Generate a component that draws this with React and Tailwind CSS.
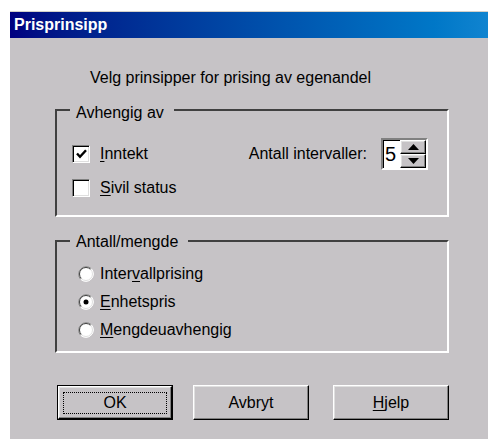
import React from "react";

const GRAY = "bg-[#c6c3c6]";

// classic raised 3D bevel used by push buttons and spinner arrows
const raised =
  "border border-t-white border-l-white border-r-black border-b-black shadow-[inset_-1px_-1px_#808080,inset_1px_1px_#dfdfdf]";

function Checkbox({ checked }) {
  return (
    <span className="w-[18px] h-[18px] shrink-0 bg-white border border-t-[#808080] border-l-[#808080] border-r-white border-b-white shadow-[inset_1px_1px_#000,inset_-1px_-1px_#dfdfdf] flex items-center justify-center">
      {checked && (
        <svg width="11" height="10" viewBox="0 0 11 10">
          <path d="M1 4.5 L4 7.8 L10 1.2" stroke="#000" strokeWidth="2.4" fill="none" />
        </svg>
      )}
    </span>
  );
}

function Radio({ checked }) {
  return (
    <svg width="16" height="16" viewBox="0 0 16 16" className="shrink-0">
      <circle cx="8" cy="8" r="7.5" fill="#fff" />
      <path d="M13.3 2.7 A7.5 7.5 0 0 0 2.7 13.3" stroke="#808080" strokeWidth="1" fill="none" />
      <path d="M12.6 3.4 A6.5 6.5 0 0 0 3.4 12.6" stroke="#404040" strokeWidth="1" fill="none" />
      <path d="M2.7 13.3 A7.5 7.5 0 0 0 13.3 2.7" stroke="#fff" strokeWidth="1" fill="none" />
      <path d="M3.4 12.6 A6.5 6.5 0 0 0 12.6 3.4" stroke="#dfdfdf" strokeWidth="1" fill="none" />
      {checked && <circle cx="8" cy="8" r="2.5" fill="#000" />}
    </svg>
  );
}

function Spinner({ value }) {
  return (
    <div className="w-[47px] h-[32px] flex bg-white border-2 border-t-[#808080] border-l-[#808080] border-r-white border-b-white shadow-[inset_1px_1px_#000]">
      <span className="w-[17px] pl-[2px] text-[20px] leading-[28px]">{value}</span>
      <div className="flex flex-col w-[26px]">
        <span className={`h-[14px] ${GRAY} ${raised} flex items-center justify-center`}>
          <svg width="11" height="6" viewBox="0 0 11 6">
            <path d="M5.5 0 L11 6 L0 6 Z" fill="#000" />
          </svg>
        </span>
        <span className={`h-[14px] ${GRAY} ${raised} flex items-center justify-center`}>
          <svg width="11" height="6" viewBox="0 0 11 6">
            <path d="M0 0 L11 0 L5.5 6 Z" fill="#000" />
          </svg>
        </span>
      </div>
    </div>
  );
}

function Group({ label, labelPos, className, children }) {
  return (
    <div
      className={
        "relative w-[394px] border-2 border-t-[#404040] border-l-[#404040] border-r-white border-b-white " +
        className
      }
    >
      <span className={`absolute left-[13px] pl-[6px] pr-[10px] leading-[18px] ${GRAY} ${labelPos}`}>{label}</span>
      {children}
    </div>
  );
}

function Key({ children }) {
  return <u className="underline decoration-1 underline-offset-2">{children}</u>;
}

export default function App() {
  return (
    <div className="w-[488px] h-[439px] bg-white pt-[11px] pl-[10px] text-black text-[16px] font-['Liberation_Sans',Arial,sans-serif]">
      <div className="h-full flex flex-col">
        {/* title bar */}
        <div className="h-[27px] border-t border-[#d4d0c8] bg-gradient-to-r from-[#000080] to-[#1084d0] flex items-center pl-[4px]">
          <span className="text-white font-bold text-[16px] leading-[18px]">Prisprinsipp</span>
        </div>

        <div className={`flex-1 ${GRAY} pl-[45px] flex flex-col`}>
          <p className="mt-[31px] ml-[35px] leading-[18px]">Velg prinsipper for prising av egenandel</p>

          <Group label="Avhengig av" labelPos="top-[-7px]" className="mt-[22px] h-[108px]">
            <div className="pt-[27px] pl-[15px] pr-[19px]">
              <div className="flex items-center h-[32px]">
                <div className="flex items-center gap-[10px]">
                  <Checkbox checked />
                  <span className="leading-[18px]">
                    <Key>I</Key>nntekt
                  </span>
                </div>
                <span className="ml-auto mr-[14px] leading-[18px]">Antall intervaller:</span>
                <Spinner value="5" />
              </div>
              <div className="flex items-center gap-[10px] mt-[9px] h-[18px]">
                <Checkbox />
                <span className="leading-[18px]">
                  <Key>S</Key>ivil status
                </span>
              </div>
            </div>
          </Group>

          <Group label="Antall/mengde" labelPos="top-[-9px]" className="mt-[23px] h-[113px]">
            <div className="pt-[23px] pl-[21px] flex flex-col gap-[10px]">
              <div className="flex items-center gap-[6px] h-[18px]">
                <Radio />
                <span className="leading-[18px]">
                  Inter<Key>v</Key>allprising
                </span>
              </div>
              <div className="flex items-center gap-[6px] h-[18px]">
                <Radio checked />
                <span className="leading-[18px]">
                  <Key>E</Key>nhetspris
                </span>
              </div>
              <div className="flex items-center gap-[6px] h-[18px]">
                <Radio />
                <span className="leading-[18px]">
                  <Key>M</Key>engdeuavhengig
                </span>
              </div>
            </div>
          </Group>

          {/* dialog buttons */}
          <div className="flex mt-[32px] ml-[2px]">
            <button className="w-[116px] h-[35px] border border-black p-0">
              <div className={`w-full h-full ${raised} flex items-center justify-center`}>
                <span className="w-[104px] h-[22px] border border-dotted border-black flex items-center justify-center leading-[18px]">
                  OK
                </span>
              </div>
            </button>
            <button className={`ml-[20px] w-[116px] h-[35px] ${raised} leading-[18px]`}>Avbryt</button>
            <button className={`ml-[24px] w-[116px] h-[35px] ${raised} leading-[18px]`}>
              <Key>H</Key>jelp
            </button>
          </div>
        </div>
      </div>
    </div>
  );
}
